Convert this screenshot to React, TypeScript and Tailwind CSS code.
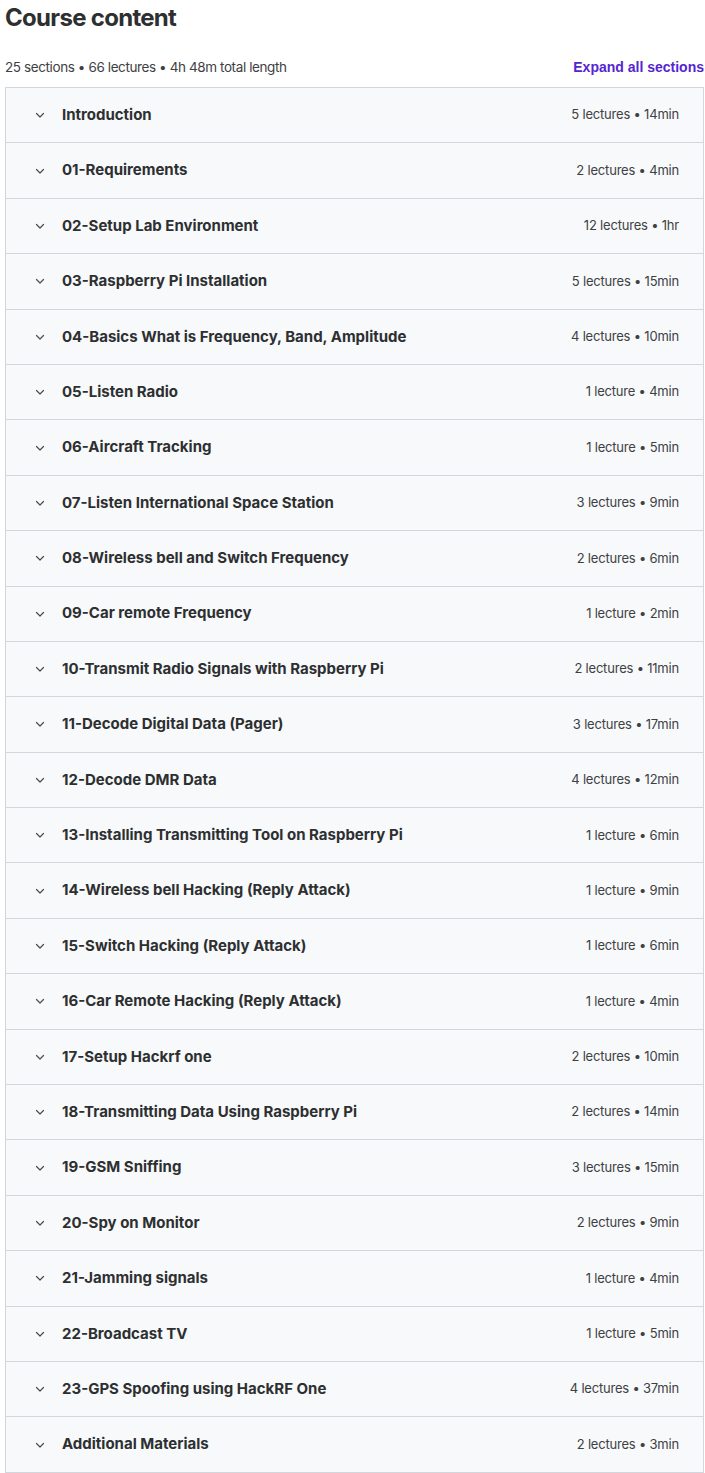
const sections = [
  { title: 'Introduction', meta: '5 lectures • 14min' },
  { title: '01-Requirements', meta: '2 lectures • 4min' },
  { title: '02-Setup Lab Environment', meta: '12 lectures • 1hr' },
  { title: '03-Raspberry Pi Installation', meta: '5 lectures • 15min' },
  { title: '04-Basics What is Frequency, Band, Amplitude', meta: '4 lectures • 10min' },
  { title: '05-Listen Radio', meta: '1 lecture • 4min' },
  { title: '06-Aircraft Tracking', meta: '1 lecture • 5min' },
  { title: '07-Listen International Space Station', meta: '3 lectures • 9min' },
  { title: '08-Wireless bell and Switch Frequency', meta: '2 lectures • 6min' },
  { title: '09-Car remote Frequency', meta: '1 lecture • 2min' },
  { title: '10-Transmit Radio Signals with Raspberry Pi', meta: '2 lectures • 11min' },
  { title: '11-Decode Digital Data (Pager)', meta: '3 lectures • 17min' },
  { title: '12-Decode DMR Data', meta: '4 lectures • 12min' },
  { title: '13-Installing Transmitting Tool on Raspberry Pi', meta: '1 lecture • 6min' },
  { title: '14-Wireless bell Hacking (Reply Attack)', meta: '1 lecture • 9min' },
  { title: '15-Switch Hacking (Reply Attack)', meta: '1 lecture • 6min' },
  { title: '16-Car Remote Hacking (Reply Attack)', meta: '1 lecture • 4min' },
  { title: '17-Setup Hackrf one', meta: '2 lectures • 10min' },
  { title: '18-Transmitting Data Using Raspberry Pi', meta: '2 lectures • 14min' },
  { title: '19-GSM Sniffing', meta: '3 lectures • 15min' },
  { title: '20-Spy on Monitor', meta: '2 lectures • 9min' },
  { title: '21-Jamming signals', meta: '1 lecture • 4min' },
  { title: '22-Broadcast TV', meta: '1 lecture • 5min' },
  { title: '23-GPS Spoofing using HackRF One', meta: '4 lectures • 37min' },
  { title: 'Additional Materials', meta: '2 lectures • 3min' },
]

function Chevron() {
  return (
    <svg
      width="12"
      height="12"
      viewBox="0 0 12 12"
      fill="none"
      stroke="#4a4d50"
      strokeWidth="1.2"
      strokeLinecap="round"
      strokeLinejoin="round"
      aria-hidden="true"
    >
      <path d="M2.5 4.5 6 8l3.5-3.5" />
    </svg>
  )
}

export default function App() {
  return (
    <div
      className="w-[705px] bg-white pl-[5px] pr-[1px] text-[#2d2f31]"
      style={{ fontFamily: 'Inter, "Noto Sans", sans-serif' }}
    >
      <h2 className="pt-[3px] text-[24px] font-bold leading-[30px] tracking-[-0.7px]">
        Course content
      </h2>
      <div className="mt-[23px] flex h-[22px] items-center justify-between">
        <span className="text-[13.5px] tracking-[-0.4px] text-[#3e4143]">
          25 sections • 66 lectures • 4h 48m total length
        </span>
        <button
          className="text-[14px] font-bold text-[#5624d0]"
          style={{ fontFamily: '"Liberation Sans", Arial, sans-serif' }}
        >
          Expand all sections
        </button>
      </div>
      <div className="mt-[9px] border-x border-t border-[#d1d7dc]">
        {sections.map((section) => (
          <div
            key={section.title}
            className="flex h-[55.4px] items-center border-b border-[#d1d7dc] bg-[#f7f9fa] pl-[28px] pr-[24px]"
          >
            <Chevron />
            <span className="ml-[16px] flex-1 text-[15px] font-bold">{section.title}</span>
            <span className="text-[13px] tracking-[-0.2px] text-[#3e4143]">{section.meta}</span>
          </div>
        ))}
      </div>
    </div>
  )
}
